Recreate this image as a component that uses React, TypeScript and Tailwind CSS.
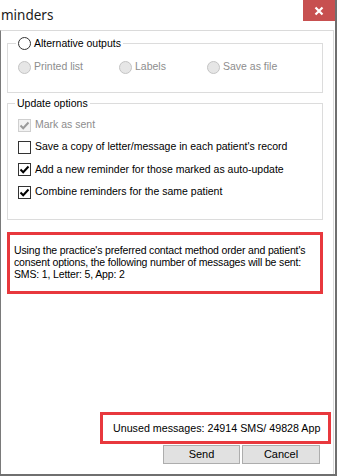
import React from "react";

const Check = ({ color }: { color: string }) => (
  <svg width="11" height="11" viewBox="0 0 11 11" className="block">
    <path d="M1.5 5.5 L4.2 8.2 L9.5 2.5" fill="none" stroke={color} strokeWidth="2" />
  </svg>
);

function CheckBox({ checked, disabled }: { checked?: boolean; disabled?: boolean }) {
  return (
    <span
      className={
        disabled
          ? "w-[13px] h-[13px] shrink-0 flex items-center justify-center border border-[#cfcfcf] bg-[#f2f2f2]"
          : "w-[13px] h-[13px] shrink-0 flex items-center justify-center border border-[#333333] bg-white"
      }
    >
      {checked ? <Check color={disabled ? "#9a9a9a" : "#000000"} /> : null}
    </span>
  );
}

function Radio({ disabled }: { disabled?: boolean }) {
  return (
    <span
      className={
        disabled
          ? "w-[13px] h-[13px] shrink-0 rounded-full border border-[#c4c4c4] bg-[#e6e6e6]"
          : "w-[13px] h-[13px] shrink-0 rounded-full border border-[#333333] bg-white"
      }
    />
  );
}

export default function App() {
  return (
    <div className="w-[338px] h-[476px] bg-white overflow-hidden font-['Liberation_Sans',Arial,sans-serif] text-[10.5px] text-black">
      <div className="w-[337px] h-[476px] border-r-2 border-b-2 border-[#6f6f6f] flex flex-col">
        {/* title bar */}
        <div className="h-[30px] flex items-start shrink-0">
          <div className="pl-[1px] pt-[5px] text-[13.5px] leading-[20px] font-['Noto_Sans','Segoe_UI',sans-serif] text-[#1a1a1a]">
            minders
          </div>
          <div className="ml-auto w-[32px] h-[21px] bg-[#c75050] flex items-center justify-center">
            <svg width="10" height="10" viewBox="0 0 10 10">
              <path d="M1.5 1.5 L8.5 8.5 M8.5 1.5 L1.5 8.5" stroke="#ffffff" strokeWidth="2.2" />
            </svg>
          </div>
        </div>
        {/* body */}
        <div className="flex-1 mr-[1px] border-t border-r border-[#dadada] border-l border-l-[#7a7a7a] flex flex-col">
          <fieldset className="ml-[6px] mt-[4px] w-[316px] h-[58px] border border-[#dcdcdc]">
            <legend className="ml-[8px] px-[2px] h-[16px] flex items-center gap-[3px]">
              <Radio />
              <span className="leading-[16px]">Alternative outputs</span>
            </legend>
            <div className="mt-[9px] ml-[10px] h-[14px] flex items-center text-[#8d8d8d]">
              <div className="w-[101px] flex items-center gap-[3px]">
                <Radio disabled />
                <span>Printed list</span>
              </div>
              <div className="w-[88px] flex items-center gap-[3px]">
                <Radio disabled />
                <span>Labels</span>
              </div>
              <div className="flex items-center gap-[3px]">
                <Radio disabled />
                <span>Save as file</span>
              </div>
            </div>
          </fieldset>

          <fieldset className="ml-[6px] mt-[3px] w-[316px] h-[124px] border border-[#dcdcdc]">
            <legend className="ml-[7px] px-[2px] h-[14px] leading-[14px]">Update options</legend>
            <div className="mt-[4px] ml-[10px] flex flex-col">
              <div className="h-[22px] flex items-center gap-[4px] text-[#8d8d8d]">
                <CheckBox checked disabled />
                <span>Mark as sent</span>
              </div>
              <div className="h-[22px] flex items-center gap-[4px]">
                <CheckBox />
                <span>Save a copy of letter/message in each patient's record</span>
              </div>
              <div className="h-[23px] flex items-center gap-[4px]">
                <CheckBox checked />
                <span>Add a new reminder for those marked as auto-update</span>
              </div>
              <div className="h-[22px] flex items-center gap-[4px]">
                <CheckBox checked />
                <span>Combine reminders for the same patient</span>
              </div>
            </div>
          </fieldset>

          <div className="ml-[6px] mt-[12px] w-[316px] h-[62px] border-[3px] border-[#e8383d] pl-[4px] pt-[9px] leading-[12px] whitespace-nowrap tracking-[-0.15px]">
            Using the practice's preferred contact method order and patient's
            <br />
            consent options, the following number of messages will be sent:
            <br />
            SMS: 1, Letter: 5, App: 2
          </div>

          <div className="ml-[99px] mt-[118px] w-[231px] h-[32px] border-[3px] border-[#e8383d] pl-[10px] flex items-center whitespace-nowrap text-[10.7px]">
            Unused messages: 24914 SMS/ 49828 App
          </div>

          <div className="ml-[162px] mt-[1px] flex gap-[2px]">
            <button className="w-[77px] h-[19px] bg-[#e1e1e1] border border-[#adadad] text-[11px] leading-[17px] text-black">
              Send
            </button>
            <button className="w-[78px] h-[19px] bg-[#e1e1e1] border border-[#adadad] text-[11px] leading-[17px] text-black">
              Cancel
            </button>
          </div>
        </div>
      </div>
    </div>
  );
}
